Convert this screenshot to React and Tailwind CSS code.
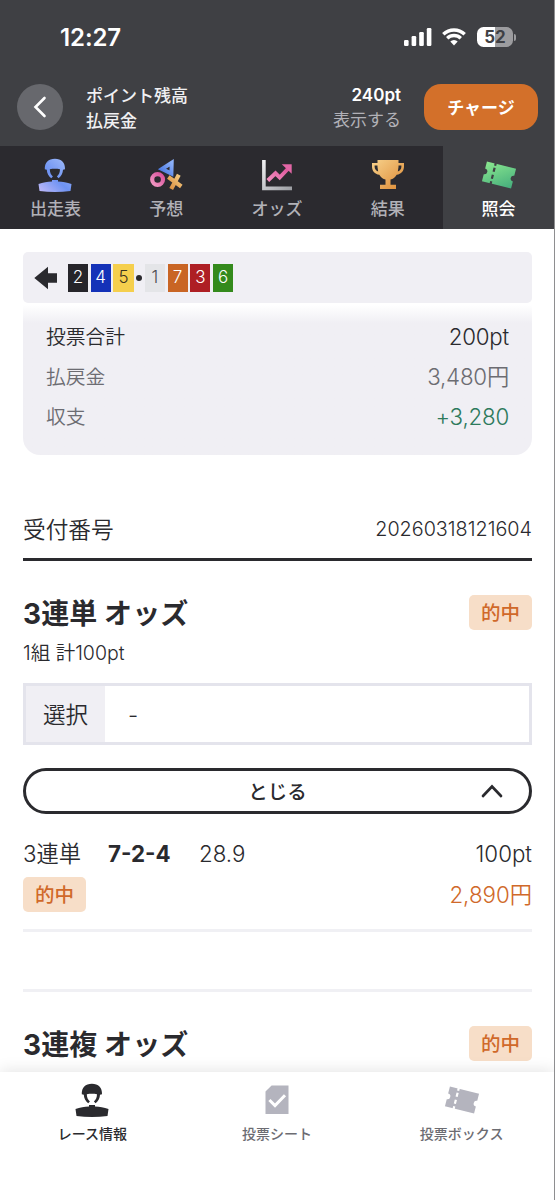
import clsx from 'clsx';

const boats = [
  { n: 2, cls: 'bg-[#26252a] text-white' },
  { n: 4, cls: 'bg-[#1432b8] text-white' },
  { n: 5, cls: 'bg-[#f5cf4d] text-[#3a3320]' },
  { dot: true },
  { n: 1, cls: 'bg-[#e4e5e8] text-[#4a4a4f]' },
  { n: 7, cls: 'bg-[#c96524] text-white' },
  { n: 3, cls: 'bg-[#ae1f24] text-white' },
  { n: 6, cls: 'bg-[#348a1c] text-white' },
];

function JockeyIcon({ fill = 'currentColor' }) {
  return (
    <svg width="34" height="34" viewBox="0 0 34 34">
      <defs>
        <linearGradient id="jockey" gradientUnits="userSpaceOnUse" x1="2" y1="32" x2="28" y2="4">
          <stop offset="0" stopColor="#b9b6f8" />
          <stop offset="0.5" stopColor="#6e93f3" />
          <stop offset="1" stopColor="#9ab6f8" />
        </linearGradient>
      </defs>
      <path fill={fill} d="M6.800 11.300C6.500 4.600 10.500.700 16.900.700S27.300 4.600 27 11.300L25 11.700C24.800 15.300 23.400 18.200 20.600 20.200L18.900 18.400C20.900 16.700 21.900 14.400 22 11.200 18.800 10.600 15 10.600 11.800 11.200 11.900 14.400 12.900 16.700 14.900 18.400L13.200 20.200C10.400 18.200 9 15.300 8.800 11.700Z" />
      <path fill={fill} d="M14 22H20V23.400C24.600 23.600 29 24.500 33.500 25.900L32.500 33.100C22.600 34.300 11.400 34.300 1.500 33.100L.500 25.900C5 24.500 9.400 23.600 14 23.400Z" />
    </svg>
  );
}

function PredictIcon() {
  return (
    <svg width="33" height="34" viewBox="0 0 33 34" fill="none">
      <defs>
        <linearGradient id="pr-tri" x1="0" y1="1" x2="1" y2="0"><stop stopColor="#4a78e0" /><stop offset="1" stopColor="#8bb0fa" /></linearGradient>
        <linearGradient id="pr-ring" x1="0" y1="1" x2="1" y2="0"><stop stopColor="#f29ac4" /><stop offset="1" stopColor="#d9509a" /></linearGradient>
        <linearGradient id="pr-x" x1="0" y1="1" x2="1" y2="0"><stop stopColor="#d98a3c" /><stop offset="1" stopColor="#f6cf86" /></linearGradient>
      </defs>
      <path d="M12 11 21.700 4.800l-.300 10.700Z" stroke="url(#pr-tri)" strokeWidth="4" />
      <circle cx="7.600" cy="21.500" r="5.400" stroke="url(#pr-ring)" strokeWidth="4.200" />
      <path d="m18.300 19 13 9.500M28.800 16.800l-7.600 14.200" stroke="url(#pr-x)" strokeWidth="4.200" />
    </svg>
  );
}

function OddsIcon() {
  return (
    <svg width="34" height="34" viewBox="0 0 34 34" fill="none">
      <defs>
        <linearGradient id="od-axis" x1="0" y1="0" x2="1" y2="1"><stop stopColor="#f1f1f3" /><stop offset="1" stopColor="#9c9ea3" /></linearGradient>
        <linearGradient id="od-line" x1="0" y1="1" x2="1" y2="0"><stop stopColor="#f38fc0" /><stop offset="1" stopColor="#de559b" /></linearGradient>
      </defs>
      <path d="M3.900 2v28.400H32" stroke="url(#od-axis)" strokeWidth="3.600" />
      <path d="m7.800 22.500 7.700-7.200 4.200 4.200 8.500-9" stroke="url(#od-line)" strokeWidth="4" />
      <path d="M21.800 6.300h9.900v9.500Z" fill="#e266a6" />
    </svg>
  );
}

function TrophyIcon() {
  return (
    <svg width="34" height="34" viewBox="0 0 34 34">
      <defs>
        <linearGradient id="trophy" x1="0" y1="0" x2="1" y2="1"><stop stopColor="#f7d18b" /><stop offset="1" stopColor="#dd8a35" /></linearGradient>
      </defs>
      <path fill="url(#trophy)" fillRule="evenodd" d="M6.500 2h21v3H33v3.500c0 4.500-2.700 7.600-7.300 8.300-1.500 2.500-3.700 4.300-6.200 4.800v5.200H25V31H9v-4.200h5.500v-5.200c-2.500-.5-4.700-2.300-6.200-4.800C3.700 16.100 1 13 1 8.500V5h5.500ZM3.600 7.500v1c0 2.400 1.200 4.200 3.600 5L6.500 9V7.500Zm26.800 0h-2.900V9l-.7 4.500c2.400-.8 3.600-2.600 3.600-5Z" />
    </svg>
  );
}

function TicketIcon({ fill = 'currentColor', line = '#fff' }) {
  return (
    <svg width="36" height="32" viewBox="0 0 36 32">
      <defs>
        <linearGradient id="ticket" x1="0" y1="0" x2="1" y2="1"><stop stopColor="#8be88f" /><stop offset="1" stopColor="#44ad7c" /></linearGradient>
      </defs>
      <g transform="rotate(14 18 16)">
        <path fill={fill} d="M3 5.700h30v7.400a2.900 2.900 0 0 0 0 5.800v7.400H3v-7.400a2.900 2.900 0 0 0 0-5.800Z" />
        <path d="M12 5v3M12 10v4.200M12 17.200v4.200M12 24v3" stroke={line} strokeWidth="2.200" />
      </g>
    </svg>
  );
}

function SheetIcon() {
  return (
    <svg width="24" height="30" viewBox="0 0 24 30" fill="none">
      <path d="M6.600.5H23.500V29H.5V6.600Z" fill="#b4b4be" />
      <path d="m4.400 15 5.600 5.600L20 10.300" stroke="#fff" strokeWidth="3" />
    </svg>
  );
}

const tabs = [
  { label: '出走表', icon: <JockeyIcon fill="url(#jockey)" /> },
  { label: '予想', icon: <PredictIcon /> },
  { label: 'オッズ', icon: <OddsIcon /> },
  { label: '結果', icon: <TrophyIcon /> },
  { label: '照会', icon: <TicketIcon fill="url(#ticket)" line="#3f4044" />, active: true },
];

const bottomItems = [
  { label: 'レース情報', icon: <JockeyIcon />, active: true },
  { label: '投票シート', icon: <SheetIcon /> },
  { label: '投票ボックス', icon: <TicketIcon fill="#b4b4be" /> },
];

function StatusBar() {
  return (
    <div className="flex h-[74px] items-center pl-[60px] pr-[38px] text-white">
      <span className="pt-px text-[24px] leading-none font-semibold tracking-[-0.100px]">12:27</span>
      <div className="ml-auto flex items-center">
        <svg width="28" height="18" viewBox="0 0 28 18" fill="#fff">
          <rect x="0" y="12" width="4.600" height="6" rx="1.200" />
          <rect x="7.600" y="8" width="4.600" height="10" rx="1.200" />
          <rect x="15.200" y="4" width="4.600" height="14" rx="1.200" />
          <rect x="22.800" y="0" width="4.600" height="18" rx="1.200" />
        </svg>
        <svg className="ml-2.5" width="24" height="18" viewBox="0 0 24 18" fill="none" stroke="#fff">
          <path d="M1.300 6.300a15.300 15.300 0 0 1 21.400 0" strokeWidth="3.400" />
          <path d="M5.200 10.300a9.700 9.700 0 0 1 13.600 0" strokeWidth="3.300" />
          <path d="M8.300 13.600a5.300 5.300 0 0 1 7.400 0L12 17.600Z" fill="#fff" stroke="none" />
        </svg>
        <div className="ml-[11px] flex h-5 w-9 items-center justify-center rounded-[6.500px] bg-linear-to-r from-white from-50% to-[#9c9c9f] to-50% text-[17px] leading-none font-bold text-[#3f4044]">52</div>
        <div className="ml-px h-[7px] w-[2px] rounded-r-full bg-[#9c9c9f]" />
      </div>
    </div>
  );
}

function HitBadge() {
  return <div className="flex h-[35px] w-[63px] items-center justify-center rounded-[5px] bg-[#f7dec8] pt-[2px] text-[19.500px] leading-none font-medium text-[#d0692a]">的中</div>;
}

function BetTitle({ children }) {
  return (
    <div className="flex h-[36px] items-start justify-between">
      <h2 className="pt-[5px] text-[28px] leading-none font-bold tracking-[0.100px]">{children}</h2>
      <HitBadge />
    </div>
  );
}

function SummaryRow({ label, value, className, valueClass }) {
  return (
    <div className={clsx('flex h-10 items-center justify-between', className)}>
      <span className="pt-[2px] text-[19.800px]">{label}</span>
      <span className={clsx('text-[22.300px] tracking-[-0.200px]', valueClass)}>{value}</span>
    </div>
  );
}

export default function App() {
  return (
    <div className="relative flex h-[1200px] w-[555px] flex-col overflow-hidden border-r border-[#8e8e90] bg-white font-['Inter','Noto_Sans_CJK_JP',sans-serif] font-[350] text-[#2a2a2e]">
      <header className="h-[146px] shrink-0 bg-[#3f4044]">
        <StatusBar />
        <div className="flex h-[65px] items-center pl-[17px] pr-4">
          <button className="flex size-[46px] items-center justify-center rounded-full bg-[#67686d]">
            <svg width="14" height="22" viewBox="0 0 14 22" fill="none" stroke="#fff" strokeWidth="2.600" strokeLinecap="round">
              <path d="M11.500 2 2.500 11l9 9" />
            </svg>
          </button>
          <div className="ml-[23px] pt-[4px] text-[17px] leading-[25px] font-medium text-[#f0f0f2]">
            <p>ポイント残高</p>
            <p>払戻金</p>
          </div>
          <div className="ml-auto pt-[3px] text-right text-[17px] leading-[25px]">
            <p className="leading-[24px] font-semibold text-white">240pt</p>
            <p className="leading-[26px] font-normal text-[#b1b1b7]">表示する</p>
          </div>
          <button className="ml-[23px] h-[46px] w-[114px] rounded-[17px] bg-[#d3702a] pt-[3px] text-[17px] leading-none font-bold text-white">チャージ</button>
        </div>
      </header>

      <nav className="grid h-[83px] shrink-0 grid-cols-5 bg-[#2b2a2f]">
        {tabs.map(({ label, icon, active }) => (
          <div key={label} className={clsx('flex flex-col items-center pt-3', active ? 'bg-[#3f4044] text-white' : 'text-[#b1b1b7]')}>
            <div className="flex h-[34px] items-center justify-center">{icon}</div>
            <span className="mt-[7px] text-[17px] leading-[20px] font-medium">{label}</span>
          </div>
        ))}
      </nav>

      <main className="min-h-0 flex-1 overflow-hidden px-[23px] pr-[22px] pt-[23px]">
        <div className="flex h-[51px] items-center rounded-[5px] bg-[#f0eff4] pl-[11px]">
          <svg className="mr-[9.800px]" width="24" height="24" viewBox="0 0 24 24" fill="#2a2a2e">
            <path d="M.300 12 14 .800v6.400h9v9.600h-9v6.400Z" />
          </svg>
          <div className="flex items-center gap-[2.600px]">
            {boats.map((b, i) =>
              b.dot ? (
                <span key={i} className="size-[6px] rounded-full bg-[#2a2a2e]" />
              ) : (
                <span key={i} className={clsx('flex h-[28px] w-[20.200px] items-center justify-center text-[17px] leading-none', b.cls)}>{b.n}</span>
              )
            )}
          </div>
        </div>

        <section className="h-[152px] rounded-b-[17px] bg-linear-to-b from-white from-[2px] to-[#f0eff4] to-[20px] px-[23px] pt-[14px]">
          <SummaryRow label="投票合計" value="200pt" />
          <SummaryRow label="払戻金" value="3,480円" className="text-[#6c6c72]" />
          <SummaryRow label="収支" value="+3,280" className="text-[#6c6c72]" valueClass="text-[#2d7a5c]" />
        </section>

        <div className="mt-[45px] flex h-[61px] items-center justify-between border-b-3 border-[#2a2a2e]">
          <span className="pt-[3px] text-[22.700px]">受付番号</span>
          <span className="pt-[2px] text-[19.800px]">20260318121604</span>
        </div>

        <section className="mt-[34px]">
          <BetTitle>3連単 オッズ</BetTitle>
          <p className="mt-[10px] text-[19.500px] leading-[24px]">1組 計100pt</p>
          <div className="mt-[18px] flex h-[62px] border-3 border-[#e4e4ec] text-[22.500px]">
            <div className="flex w-[79px] items-center justify-center bg-[#f0eff4] pt-[2px]">選択</div>
            <div className="flex items-center pt-px pl-[23px]">-</div>
          </div>
          <button className="mt-[23px] grid h-[46px] w-full grid-cols-[1fr_auto_1fr] items-center rounded-full border-3 border-[#2a2a2e] text-[19.500px] leading-none font-medium">
            <span />
            <span className="pt-[3px]">とじる</span>
            <svg className="mr-[26px] justify-self-end" width="22" height="14" viewBox="0 0 22 14" fill="none" stroke="#2a2a2e" strokeWidth="2.700" strokeLinecap="round">
              <path d="m2 12 9-9.500 9 9.500" />
            </svg>
          </button>
          <div className="mt-[20px] flex h-10 items-center text-[22.300px]">
            <span className="w-[85px]">3連単</span>
            <span className="w-[91px] font-bold">7-2-4</span>
            <span>28.9</span>
            <span className="ml-auto">100pt</span>
          </div>
          <div className="flex h-[41px] items-center justify-between">
            <HitBadge />
            <span className="pt-px text-[22.300px] text-[#d0692a]">2,890円</span>
          </div>
          <div className="mt-[14px] h-[3px] bg-[#f0f0f4]" />
        </section>

        <section className="mt-[57px] border-t-3 border-[#f0f0f4] pt-[34px]">
          <BetTitle>3連複 オッズ</BetTitle>
        </section>
      </main>

      <nav className="relative grid h-[128px] shrink-0 grid-cols-3 items-start bg-white pt-[11px] shadow-[0_-2px_14px_rgba(0,0,0,0.100)]">
        {bottomItems.map(({ label, icon, active }) => (
          <div key={label} className="flex flex-col items-center">
            <div className="flex h-[34px] items-center justify-center">{icon}</div>
            <span className={clsx('mt-[7px] text-[14px] leading-[20px] font-medium', active ? 'text-[#2a2a2e]' : 'text-[#6c6c72]')}>{label}</span>
          </div>
        ))}
      </nav>
    </div>
  );
}
